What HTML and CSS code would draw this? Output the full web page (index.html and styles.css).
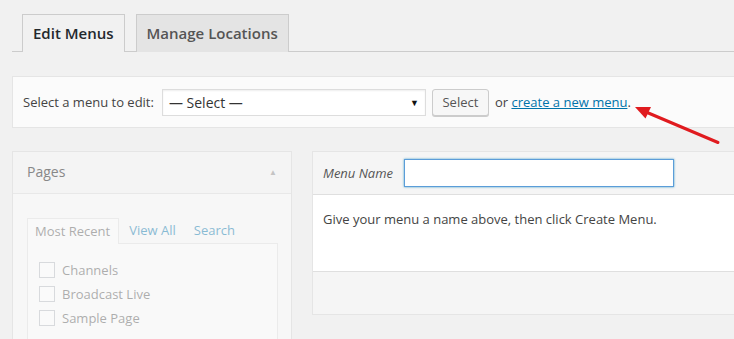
FILE: index.html
```html
<!DOCTYPE html>
<html>
<head>
<meta charset="utf-8">
<link rel="stylesheet" href="styles.css">
</head>
<body>
<div class="wrap">
  <h2 class="nav-tabs">
    <span class="nav-tab active">Edit Menus</span>
    <span class="nav-tab">Manage Locations</span>
  </h2>

  <div class="manage-menus">
    <label class="select-label">Select a menu to edit:</label>
    <div class="fake-select">
      <span>— Select —</span>
      <span class="caret">▼</span>
    </div>
    <button class="btn">Select</button>
    <span class="or-text">or <a href="#" class="link">create a new menu</a>.</span>
  </div>

  <div class="columns">
    <div class="side-panel">
      <div class="side-head">
        <span>Pages</span>
        <span class="side-arrow">▲</span>
      </div>
      <div class="side-body">
        <div class="inner-tabs">
          <span class="inner-tab active">Most Recent</span>
          <span class="inner-tab">View All</span>
          <span class="inner-tab">Search</span>
        </div>
        <div class="inner-panel">
          <div class="check-row"><span class="box"></span><span>Channels</span></div>
          <div class="check-row"><span class="box"></span><span>Broadcast Live</span></div>
          <div class="check-row"><span class="box"></span><span>Sample Page</span></div>
        </div>
      </div>
    </div>

    <div class="menu-panel">
      <div class="menu-head">
        <span class="menu-name-label">Menu Name</span>
        <div class="menu-input"></div>
      </div>
      <div class="menu-body">Give your menu a name above, then click Create Menu.</div>
      <div class="menu-foot"></div>
    </div>
  </div>
</div>

<svg class="annot-arrow" width="100" height="50" viewBox="0 0 100 50">
  <line x1="88" y1="42.5" x2="16" y2="12" stroke="#e01b1f" stroke-width="3" stroke-linecap="round"/>
  <polygon points="5,7 21,7 15.5,18.5" fill="#e01b1f"/>
</svg>
</body>
</html>
```

FILE: styles.css
```css
html, body {
  margin: 0;
  padding: 0;
}
body {
  background: #f1f1f1;
  font-family: "Open Sans", "Liberation Sans", sans-serif;
  font-size: 13px;
  color: #444;
  width: 734px;
  height: 339px;
  overflow: hidden;
  position: relative;
}
.wrap {
  width: 820px;
  padding-left: 12px;
}
.nav-tabs {
  margin: 0;
  padding: 14px 0 0 10px;
  border-bottom: 1px solid #ccc;
  display: flex;
  gap: 11px;
  font-size: 15px;
  font-weight: 600;
  line-height: 24px;
}
.nav-tab {
  border: 1px solid #ccc;
  border-bottom: none;
  padding: 6px 10px;
  margin-bottom: -1px;
  background: #e4e4e4;
  color: #555;
}
.nav-tab.active {
  background: #f1f1f1;
  color: #23282d;
  padding-bottom: 7px;
}
.manage-menus {
  margin-top: 24px;
  background: #fbfbfb;
  border: 1px solid #e5e5e5;
  height: 50px;
  display: flex;
  align-items: center;
  padding-left: 10px;
}
.select-label {
  color: #444;
  margin-right: 8px;
}
.fake-select {
  width: 250px;
  height: 25px;
  border: 1px solid #ddd;
  background: #fff;
  box-shadow: inset 0 1px 2px rgba(0,0,0,.07);
  display: flex;
  align-items: center;
  justify-content: space-between;
  padding: 0 6px;
  box-sizing: content-box;
  color: #333;
  font-size: 14px;
}
.caret {
  font-size: 9px;
  color: #111;
}
.btn {
  margin-left: 6px;
  height: 27px;
  width: 57px;
  background: #f7f7f7;
  border: 1px solid #ccc;
  border-radius: 3px;
  box-shadow: 0 1px 0 #ccc;
  font-family: "Open Sans", "Liberation Sans", sans-serif;
  font-size: 13px;
  color: #555;
  padding: 0;
}
.or-text {
  margin-left: 6px;
  color: #444;
}
.link {
  color: #0073aa;
  text-decoration: underline;
}
.columns {
  margin-top: 23px;
  display: flex;
  gap: 20px;
  align-items: flex-start;
}
.side-panel {
  width: 278px;
  border: 1px solid #e5e5e5;
  background: #f7f7f7;
  height: 200px;
}
.side-head {
  height: 42px;
  border-bottom: 1px solid #e8e8e8;
  background: #f4f4f4;
  display: flex;
  align-items: center;
  justify-content: space-between;
  padding: 0 14px 3px;
  box-sizing: border-box;
  font-size: 14px;
  color: #888;
}
.side-arrow {
  font-size: 8px;
  color: #c4c4c4;
}
.side-body {
  padding: 24px 13px 0 14px;
  opacity: 0.45;
}
.inner-tabs {
  display: flex;
  align-items: stretch;
  height: 25px;
  line-height: 24px;
}
.inner-tab {
  color: #0073aa;
  padding: 0 8px 0 8px;
}
.inner-tab.active {
  color: #555;
  border: 1px solid #ddd;
  border-bottom: none;
  background: #fdfdfd;
  padding: 0 8px 0 7px;
  margin-bottom: -1px;
  position: relative;
  z-index: 1;
}
.inner-tab + .inner-tab { margin-left: 2px; }
.inner-panel {
  border: 1px solid #ddd;
  background: #fdfdfd;
  padding: 14px 11px 20px;
  height: 80px;
}
.check-row {
  display: flex;
  align-items: center;
  height: 24px;
  color: #555;
}
.box {
  width: 14px;
  height: 14px;
  border: 1px solid #b4b9be;
  background: #fff;
  margin-right: 7px;
}
.menu-panel {
  flex: 1;
  border: 1px solid #e5e5e5;
  background: #fff;
}
.menu-head {
  height: 42px;
  background: #f5f5f5;
  display: flex;
  align-items: center;
  padding-left: 10px;
}
.menu-name-label {
  font-style: italic;
  color: #555;
  width: 81px;
}
.menu-input {
  width: 268px;
  height: 26px;
  border: 1px solid #5b9dd9;
  background: #fff;
  box-shadow: 0 0 2px rgba(30,140,190,.8);
}
.menu-body {
  border-top: 1px solid #dfdfdf;
  height: 77px;
  padding: 15px 10px 0;
  box-sizing: border-box;
  color: #444;
}
.menu-foot {
  border-top: 1px solid #dfdfdf;
  background: #f5f5f5;
  height: 42px;
}
.annot-arrow {
  position: absolute;
  left: 630px;
  top: 100px;
}
```
